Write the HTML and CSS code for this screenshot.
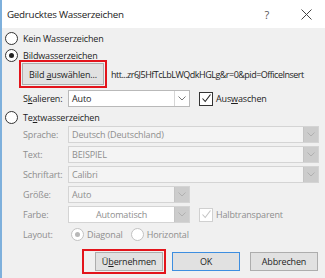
FILE: index.html
```html
<!DOCTYPE html>
<html lang="de">
  <head>
    <meta charset="UTF-8" />
    <title>Gedrucktes Wasserzeichen</title>
    <link rel="stylesheet" href="styles.css">
  </head>
  <body>
    <div class="dialog">
      <div class="titlebar">
        <span class="title">Gedrucktes Wasserzeichen</span>
        <span class="help">?</span>
        <svg class="close" width="11" height="11" viewBox="0 0 11 11">
          <path d="M0.5 0.5 L10.5 10.5 M10.5 0.5 L0.5 10.5" stroke="#444" stroke-width="1" fill="none" />
        </svg>
      </div>

      <div class="content">
        <div class="radio-row first">
          <span class="radio"></span>
          <span>Kein Wasserzeichen</span>
        </div>
        <div class="radio-row second">
          <span class="radio checked"></span>
          <span>B<u>i</u>ldwasserzeichen</span>
        </div>

        <div class="picture-row">
          <div class="highlight">
            <button class="btn pick">Bild <u>a</u>uswählen...</button>
          </div>
          <span class="path">htt...zr6J5HfTcLbLWQdkHGLg&amp;r=0&amp;pid=OfficeInsert</span>
        </div>

        <div class="field-row scale-row">
          <span class="label">S<u>k</u>alieren:</span>
          <div class="select short">
            <span class="value">Auto</span>
            <span class="arrow">
              <svg width="8" height="5" viewBox="0 0 8 5"><path d="M0.5 0.5 L4 4 L7.5 0.5" stroke="#777" fill="none" /></svg>
            </span>
          </div>
          <div class="check">
            <span class="box">
              <svg width="11" height="11" viewBox="0 0 11 11"><path d="M1.5 5.5 L4.2 8.5 L9.5 1.5" stroke="#222" stroke-width="1.1" fill="none" /></svg>
            </span>
            <span>Aus<u>w</u>aschen</span>
          </div>
        </div>

        <div class="radio-row third">
          <span class="radio"></span>
          <span>Te<u>x</u>twasserzeichen</span>
        </div>

        <div class="text-fields">
          <div class="field-row">
            <span class="label off">Sprache:</span>
            <div class="select long disabled">
              <span class="value">Deutsch (Deutschland)</span>
              <span class="arrow"><svg width="8" height="5" viewBox="0 0 8 5"><path d="M0.5 0.5 L4 4 L7.5 0.5" stroke="#b0b0b0" fill="none" /></svg></span>
            </div>
          </div>
          <div class="field-row">
            <span class="label off">Text:</span>
            <div class="select long disabled">
              <span class="value">BEISPIEL</span>
              <span class="arrow"><svg width="8" height="5" viewBox="0 0 8 5"><path d="M0.5 0.5 L4 4 L7.5 0.5" stroke="#b0b0b0" fill="none" /></svg></span>
            </div>
          </div>
          <div class="field-row">
            <span class="label off">Schriftart:</span>
            <div class="select long disabled">
              <span class="value">Calibri</span>
              <span class="arrow"><svg width="8" height="5" viewBox="0 0 8 5"><path d="M0.5 0.5 L4 4 L7.5 0.5" stroke="#b0b0b0" fill="none" /></svg></span>
            </div>
          </div>
          <div class="field-row">
            <span class="label off">Größe:</span>
            <div class="select short disabled">
              <span class="value">Auto</span>
              <span class="arrow"><svg width="8" height="5" viewBox="0 0 8 5"><path d="M0.5 0.5 L4 4 L7.5 0.5" stroke="#b0b0b0" fill="none" /></svg></span>
            </div>
          </div>
          <div class="field-row">
            <span class="label off">Farbe:</span>
            <div class="select short disabled color">
              <span class="value">Automatisch</span>
              <span class="arrow"><svg width="8" height="5" viewBox="0 0 8 5"><path d="M0.5 0.5 L4 4 L7.5 0.5" stroke="#b0b0b0" fill="none" /></svg></span>
            </div>
            <div class="check off">
              <span class="box">
                <svg width="11" height="11" viewBox="0 0 11 11"><path d="M1.5 5.5 L4.2 8.5 L9.5 1.5" stroke="#c4c4c4" stroke-width="1.1" fill="none" /></svg>
              </span>
              <span>Halbtransparent</span>
            </div>
          </div>
        </div>

        <div class="field-row layout-row">
          <span class="label off">Layout:</span>
          <div class="option off">
            <span class="radio checked"></span>
            <span>Diagonal</span>
          </div>
          <div class="option off">
            <span class="radio"></span>
            <span>Horizontal</span>
          </div>
        </div>

        <div class="buttons">
          <div class="highlight">
            <button class="btn">Ü<u>b</u>ernehmen</button>
          </div>
          <button class="btn default">OK</button>
          <button class="btn">Abbrechen</button>
        </div>
      </div>
    </div>
  </body>
</html>
```

FILE: styles.css
```css
body {
  margin: 0;
  font-family: "Open Sans", "Noto Sans", sans-serif;
  font-size: 9px;
  letter-spacing: -0.15px;
  color: #1e1e1e;
}

.dialog {
  width: 323px;
  height: 278px;
  border-left: 2px solid #7eb0dc;
  background-color: #f0f0f0;
  display: flex;
  flex-direction: column;
}

.titlebar {
  height: 28px;
  background-color: #ffffff;
  display: flex;
  align-items: center;
  padding-left: 5px;
}

.title {
  font-size: 9.8px;
  letter-spacing: -0.25px;
  color: #222;
  flex: 1;
}

.help {
  font-size: 11px;
  color: #555;
  margin-right: 32px;
}

.close {
  margin-right: 13px;
}

.content {
  display: flex;
  flex-direction: column;
}

u {
  text-decoration-thickness: 1px;
  text-underline-offset: 1px;
}

/* radios */
.radio-row {
  display: flex;
  align-items: center;
  height: 16px;
  padding-left: 3px;
}

.radio-row.first {
  margin-top: 2px;
}

.radio-row.second {
  margin-top: 1px;
}

.radio-row.third {
  margin-top: 2px;
}

.radio {
  width: 11px;
  height: 11px;
  border: 1px solid #333;
  border-radius: 50%;
  background-color: #fff;
  margin-right: 5px;
  display: flex;
  align-items: center;
  justify-content: center;
  flex-shrink: 0;
}

.radio.checked::after {
  content: "";
  width: 5px;
  height: 5px;
  border-radius: 50%;
  background-color: #222;
}

/* picture */
.picture-row {
  display: flex;
  align-items: center;
  margin-top: -3px;
  padding-left: 17px;
}

.highlight {
  border: 2px solid #e3141b;
  padding: 1px;
  display: flex;
}

.btn {
  font-family: inherit;
  font-size: 9px;
  letter-spacing: -0.15px;
  color: #1e1e1e;
  background-color: #e1e1e1;
  border: 1px solid #adadad;
  height: 19px;
  width: 68px;
  padding: 0;
  margin: 0;
}

.btn.pick {
  width: 82px;
  height: 22px;
}

.path {
  margin-left: 4px;
  letter-spacing: -0.5px;
  white-space: nowrap;
}

/* fields */
.field-row {
  display: flex;
  align-items: center;
  height: 17px;
  padding-left: 21px;
}

.scale-row {
  margin-top: 2px;
}

.label {
  width: 45px;
  flex-shrink: 0;
}

.label.off,
.off {
  color: #8e8e8e;
}

.select {
  display: flex;
  height: 17px;
  box-sizing: border-box;
  border: 1px solid #b9b9b9;
  background-color: #fff;
}

.select.short {
  width: 122px;
}

.select.long {
  width: 251px;
}

.select .value {
  flex: 1;
  padding-left: 3px;
  line-height: 15px;
  white-space: nowrap;
}

.select .arrow {
  width: 14px;
  border-left: 1px solid #d6d6d6;
  display: flex;
  align-items: center;
  justify-content: center;
}

.select.disabled {
  background-color: #f4f4f4;
  border-color: #d4d4d4;
  color: #8e8e8e;
}

.select.disabled .arrow {
  background-color: #cccccc;
  border-left-color: #c4c4c4;
}

.select.color {
  background-color: #fff;
}

.select.color .value {
  text-align: center;
  padding-left: 0;
}

.check {
  display: flex;
  align-items: center;
  margin-left: 9px;
}

.check .box {
  width: 12px;
  height: 12px;
  border: 1px solid #333;
  background-color: #fff;
  margin-right: 3px;
  display: flex;
  align-items: center;
  justify-content: center;
}

.check.off .box {
  border-color: #d0d0d0;
}

.text-fields {
  display: flex;
  flex-direction: column;
  gap: 3px;
  margin-top: 1px;
}

.layout-row {
  margin-top: 3px;
  height: 16px;
}

.layout-row .label {
  width: 48px;
}

.option {
  display: flex;
  align-items: center;
  margin-right: 8px;
}

.option .radio {
  border-color: #c2c2c2;
  margin-right: 3px;
}

.option .radio.checked::after {
  background-color: #b8b8b8;
}

/* bottom buttons */
.buttons {
  display: flex;
  align-items: center;
  justify-content: flex-end;
  margin-top: 7px;
  padding-right: 7px;
}

.btn.default {
  border-color: #3d8ee0;
  margin-left: 6px;
}

.buttons .btn:last-child {
  margin-left: 10px;
}
```
